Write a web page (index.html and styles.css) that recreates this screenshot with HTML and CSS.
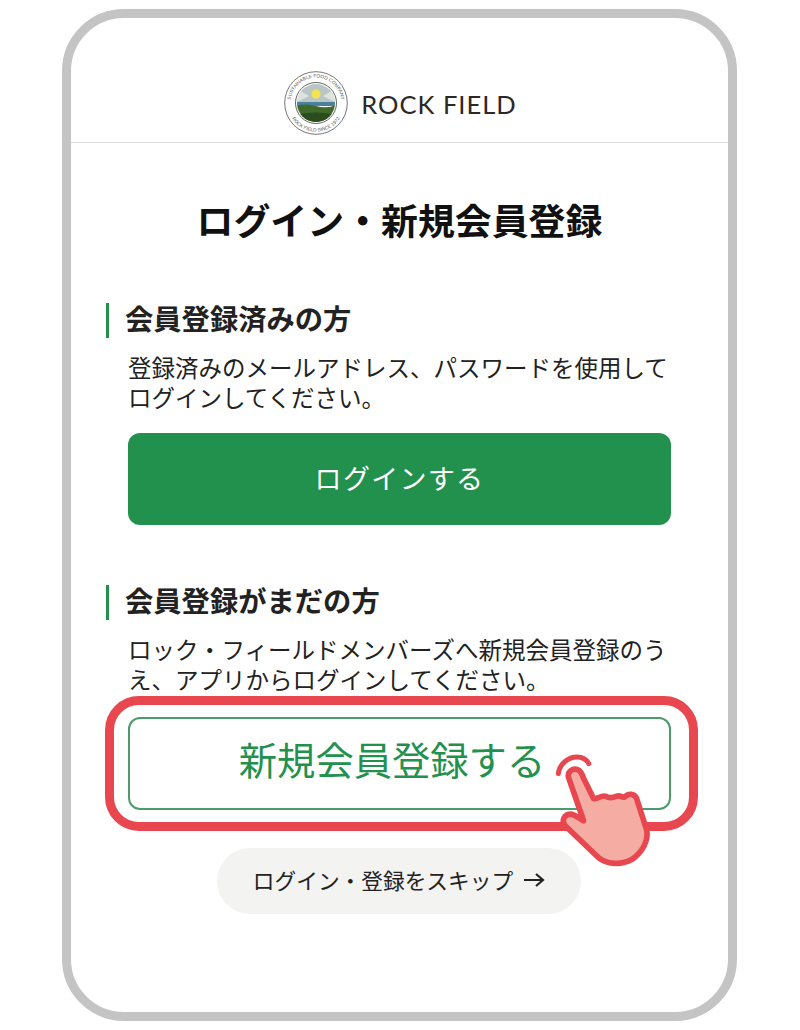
FILE: index.html
```html
<!DOCTYPE html>
<html lang="ja">
<head>
    <meta charset="UTF-8">
    <meta name="viewport" content="width=device-width, initial-scale=1.0">
    <title>ログイン・新規会員登録</title>
    <link rel="stylesheet" href="styles.css">
</head>
<body>
    <div class="phone">
        <header class="header">
            <svg class="logo" viewBox="0 0 64 64" role="img" aria-label="ROCK FIELD">
                <defs>
                    <clipPath id="logo-clip"><circle cx="32" cy="32" r="19"/></clipPath>
                    <path id="ring-top" d="M6.5 32a25.500 25.500 0 0 1 51 0"/>
                    <path id="ring-bottom" d="M3.500 32a28.500 28.500 0 0 0 57 0"/>
                </defs>
                <circle cx="32" cy="32" r="31.300" fill="#fff" stroke="#777" stroke-width="1"/>
                <circle cx="32" cy="32" r="20.500" fill="#fff" stroke="#666" stroke-width="1"/>
                <g clip-path="url(#logo-clip)">
                    <rect x="12" y="12" width="40" height="21" fill="#b9c6c4"/>
                    <path d="M13 18l12 7-12 6zM51 18l-12 7 12 6z" fill="#dfe3df"/>
                    <circle cx="32" cy="23" r="4.500" fill="#f4e34a"/>
                    <rect x="12" y="31" width="40" height="4" fill="#4c7f9a"/>
                    <path d="M12 35q10-3 20 0t20-1v20H12z" fill="#3f6a2c"/>
                    <path d="M12 44q20-5 40 0v10H12z" fill="#2a4c1f"/>
                </g>
                <text class="logo-ring"><textPath href="#ring-top" startOffset="50%" text-anchor="middle">SUSTAINABLE FOOD COMPANY</textPath></text>
                <text class="logo-ring"><textPath href="#ring-bottom" startOffset="50%" text-anchor="middle">ROCK FIELD SINCE 1972</textPath></text>
            </svg>
            <span class="brand">ROCK FIELD</span>
        </header>

        <main class="content">
            <h1 class="title">ログイン・新規会員登録</h1>

            <h2 class="section-title first">会員登録済みの方</h2>
            <p class="section-text">登録済みのメールアドレス、パスワードを使用してログインしてください。</p>
            <a class="btn btn-login">ログインする</a>

            <h2 class="section-title second">会員登録がまだの方</h2>
            <p class="section-text">ロック・フィールドメンバーズへ新規会員登録のうえ、アプリからログインしてください。</p>
            <div class="highlight">
                <a class="btn btn-register">新規会員登録する</a>
                <svg class="hand" viewBox="160 150 310 350" aria-hidden="true">
                    <path d="M176 220C180 190 206 170 232 170C248 170 260 176 268 190" fill="none" stroke="#e8474f" stroke-width="15" stroke-linecap="round"/>
                    <path d="M207 232C202 214 220 202 234 208C244 212 248 222 252 234L282 295C296 298 304 284 318 288C330 296 342 292 352 288C364 284 368 294 376 290C388 278 406 280 412 296L442 390C448 420 430 456 398 478C366 496 326 494 298 474L196 376C184 362 194 342 214 342C228 344 240 356 252 362Z" fill="#f5aca3" stroke="#e8474f" stroke-width="17" stroke-linejoin="round"/>
                </svg>
            </div>
            <a class="btn-skip">ログイン・登録をスキップ<svg class="arrow" viewBox="0 0 22 16" aria-hidden="true"><path d="M1 8h19M13 2l7 6-7 6" fill="none" stroke="#222" stroke-width="2.200"/></svg></a>
        </main>
    </div>
</body>
</html>
```

FILE: styles.css
```css
* {
    box-sizing: border-box;
}
body {
    margin: 0;
    background: #fff;
    color: #222;
    font-family: "Noto Sans CJK JP", "Noto Sans", sans-serif;
}
.phone {
    width: 675px;
    height: 1012px;
    margin: 9px 0 9px 62px;
    border: 9px solid #c4c4c4;
    border-radius: 62px;
    overflow: hidden;
}
.header {
    height: 125px;
    padding: 0 0 7px 2px;
    border-bottom: 1.5px solid #dedede;
    display: flex;
    align-items: flex-end;
    justify-content: center;
    gap: 13px;
}
.logo {
    width: 64px;
    height: 64px;
}
.logo-ring {
    font-family: "Liberation Sans", sans-serif;
    font-size: 4.800px;
    fill: #555;
}
.brand {
    font-family: "Lato", "Liberation Sans", sans-serif;
    font-size: 25.500px;
    line-height: 62px;
    letter-spacing: 1px;
    color: #2d2725;
}
.content {
    padding: 51px 57px 0;
}
.title {
    margin: 0;
    font-size: 36.900px;
    font-weight: 700;
    line-height: 50px;
    text-align: center;
    color: #111;
    white-space: nowrap;
}
.section-title {
    height: 35px;
    margin: 0 0 14px -22px;
    padding-left: 16px;
    border-left: 3px solid #23914e;
    font-size: 28.300px;
    font-weight: 700;
    line-height: 29px;
}
.section-title.first {
    margin-top: 59px;
}
.section-title.second {
    margin-top: 60px;
}
.section-text {
    margin: 0;
    font-size: 23.500px;
    line-height: 30px;
}
.btn {
    display: flex;
    align-items: center;
    justify-content: center;
    height: 92px;
    border-radius: 12px;
}
.btn-login {
    margin-top: 21px;
    padding-bottom: 3px;
    background: #23914e;
    color: #fff;
    font-size: 27px;
    letter-spacing: 1.300px;
}
.highlight {
    position: relative;
    margin: 2px -27px 0 -23px;
    padding: 12px 18px 12px 14px;
    border: 9px solid #e8474f;
    border-radius: 34px;
    background: #fff;
}
.btn-register {
    height: 93px;
    padding: 0 15px 10px 0;
    border: 2px solid #4d9a6c;
    color: #23914e;
    font-size: 38.300px;
    font-weight: 400;
}
.hand {
    position: absolute;
    left: 439px;
    top: 45px;
    width: 103px;
    height: 117px;
}
.btn-skip {
    display: flex;
    align-items: center;
    justify-content: center;
    gap: 10px;
    width: 364px;
    height: 66px;
    margin: 17px 0 0 32px;
    margin-left: 89px;
    padding-bottom: 3px;
    border-radius: 33px;
    background: #f3f3f2;
    font-size: 21.700px;
    white-space: nowrap;
}
.arrow {
    width: 22px;
    height: 16px;
}
```
